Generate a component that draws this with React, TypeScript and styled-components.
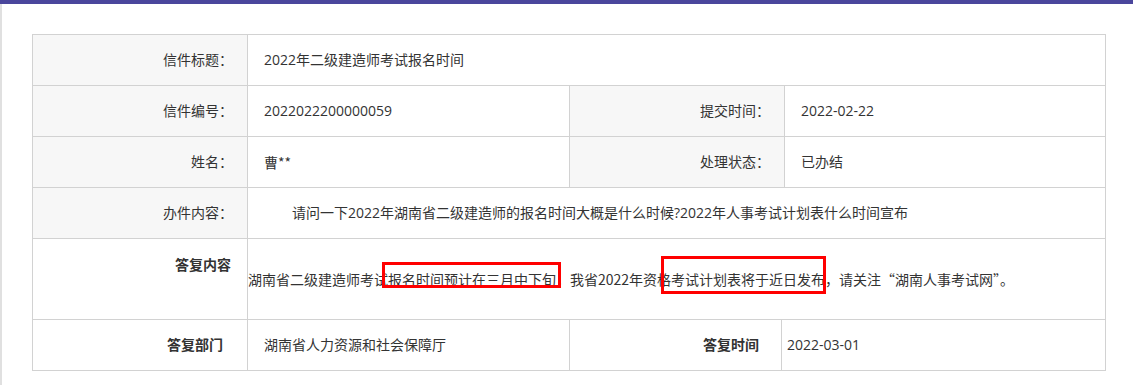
import React from "react";
import styled, { createGlobalStyle, css } from "styled-components";

const Global = createGlobalStyle`
  html, body { margin: 0; padding: 0; background: #fff; }
  body {
    font-family: "Open Sans", "Noto Sans CJK SC", "Noto Sans", sans-serif;
    font-size: 14px;
    color: #333;
  }
`;

const TopBar = styled.div`
  height: 4px;
  background: #4a469c;
`;

const Page = styled.div`
  border-left: 2px solid #e0e0e0;
  height: 381px;
  box-sizing: border-box;
  padding: 30px 0 0 30px;
`;

const Sheet = styled.div`
  width: 1074px;
  border-top: 1px solid #d2d2d2;
  border-left: 1px solid #d2d2d2;
  box-sizing: border-box;
`;

const Grid = styled.div<{ $cols: string }>`
  display: grid;
  grid-template-columns: ${(p) => p.$cols};
`;

const Cell = styled.div<{ $h?: number; $span?: number; $cjk?: boolean }>`
  box-sizing: border-box;
  height: ${(p) => p.$h ?? 51}px;
  border-right: 1px solid #d2d2d2;
  border-bottom: 1px solid #d2d2d2;
  display: flex;
  align-items: center;
  line-height: 20px;
  white-space: nowrap;
  ${(p) => p.$span && css`grid-column: span ${p.$span};`}
  ${(p) =>
    p.$cjk &&
    css`
      font-family: "Noto Sans CJK SC", "Noto Sans", sans-serif;
    `}
`;

const Label = styled(Cell)<{ $plain?: boolean; $pr?: number; $top?: boolean }>`
  background: ${(p) => (p.$plain ? "#fff" : "#f7f7f7")};
  justify-content: flex-end;
  padding-right: ${(p) => p.$pr ?? 14}px;
  font-weight: ${(p) => (p.$plain ? 700 : 400)};
  ${(p) =>
    p.$top &&
    css`
      align-items: flex-start;
      padding-top: 16px;
    `}
`;

const Value = styled(Cell)<{ $pl?: number }>`
  background: #fff;
  padding-left: ${(p) => p.$pl ?? 16}px;
`;

const Answer = styled(Cell)`
  position: relative;
  padding-left: 0;
`;

const Mark = styled.span<{ $l: number; $t: number; $w: number; $h: number }>`
  position: absolute;
  left: ${(p) => p.$l}px;
  top: ${(p) => p.$t}px;
  width: ${(p) => p.$w}px;
  height: ${(p) => p.$h}px;
  border: 3px solid #f00;
  box-sizing: border-box;
  pointer-events: none;
`;

export default function App() {
  return (
    <>
      <Global />
      <TopBar />
      <Page>
        <Sheet>
          <Grid $cols="215px 322px 215px 321px">
            <Label>信件标题：</Label>
            <Value $span={3}>2022年二级建造师考试报名时间</Value>

            <Label>信件编号：</Label>
            <Value>2022022200000059</Value>
            <Label>提交时间：</Label>
            <Value>2022-02-22</Value>

            <Label>姓名：</Label>
            <Value $cjk>曹**</Value>
            <Label>处理状态：</Label>
            <Value>已办结</Value>

            <Label>办件内容：</Label>
            <Value $span={3}>
              {"\u3000\u3000"}请问一下2022年湖南省二级建造师的报名时间大概是什么时候?2022年人事考试计划表什么时间宣布
            </Value>

            <Label $plain $top $pr={16} $h={81}>
              答复内容
            </Label>
            <Answer $span={3} $h={81} $cjk>
              湖南省二级建造师考试报名时间预计在三月中下旬，我省2022年资格考试计划表将于近日发布，请关注“湖南人事考试网”。
              <Mark $l={134} $t={23} $w={179} $h={26} />
              <Mark $l={413} $t={17} $w={165} $h={38} />
            </Answer>
          </Grid>
          <Grid $cols="215px 322px 212px 324px">
            <Label $plain $pr={24}>答复部门</Label>
            <Value $pl={16}>湖南省人力资源和社会保障厅</Value>
            <Label $plain $pr={22}>答复时间</Label>
            <Value $pl={5}>2022-03-01</Value>
          </Grid>
        </Sheet>
      </Page>
    </>
  );
}
